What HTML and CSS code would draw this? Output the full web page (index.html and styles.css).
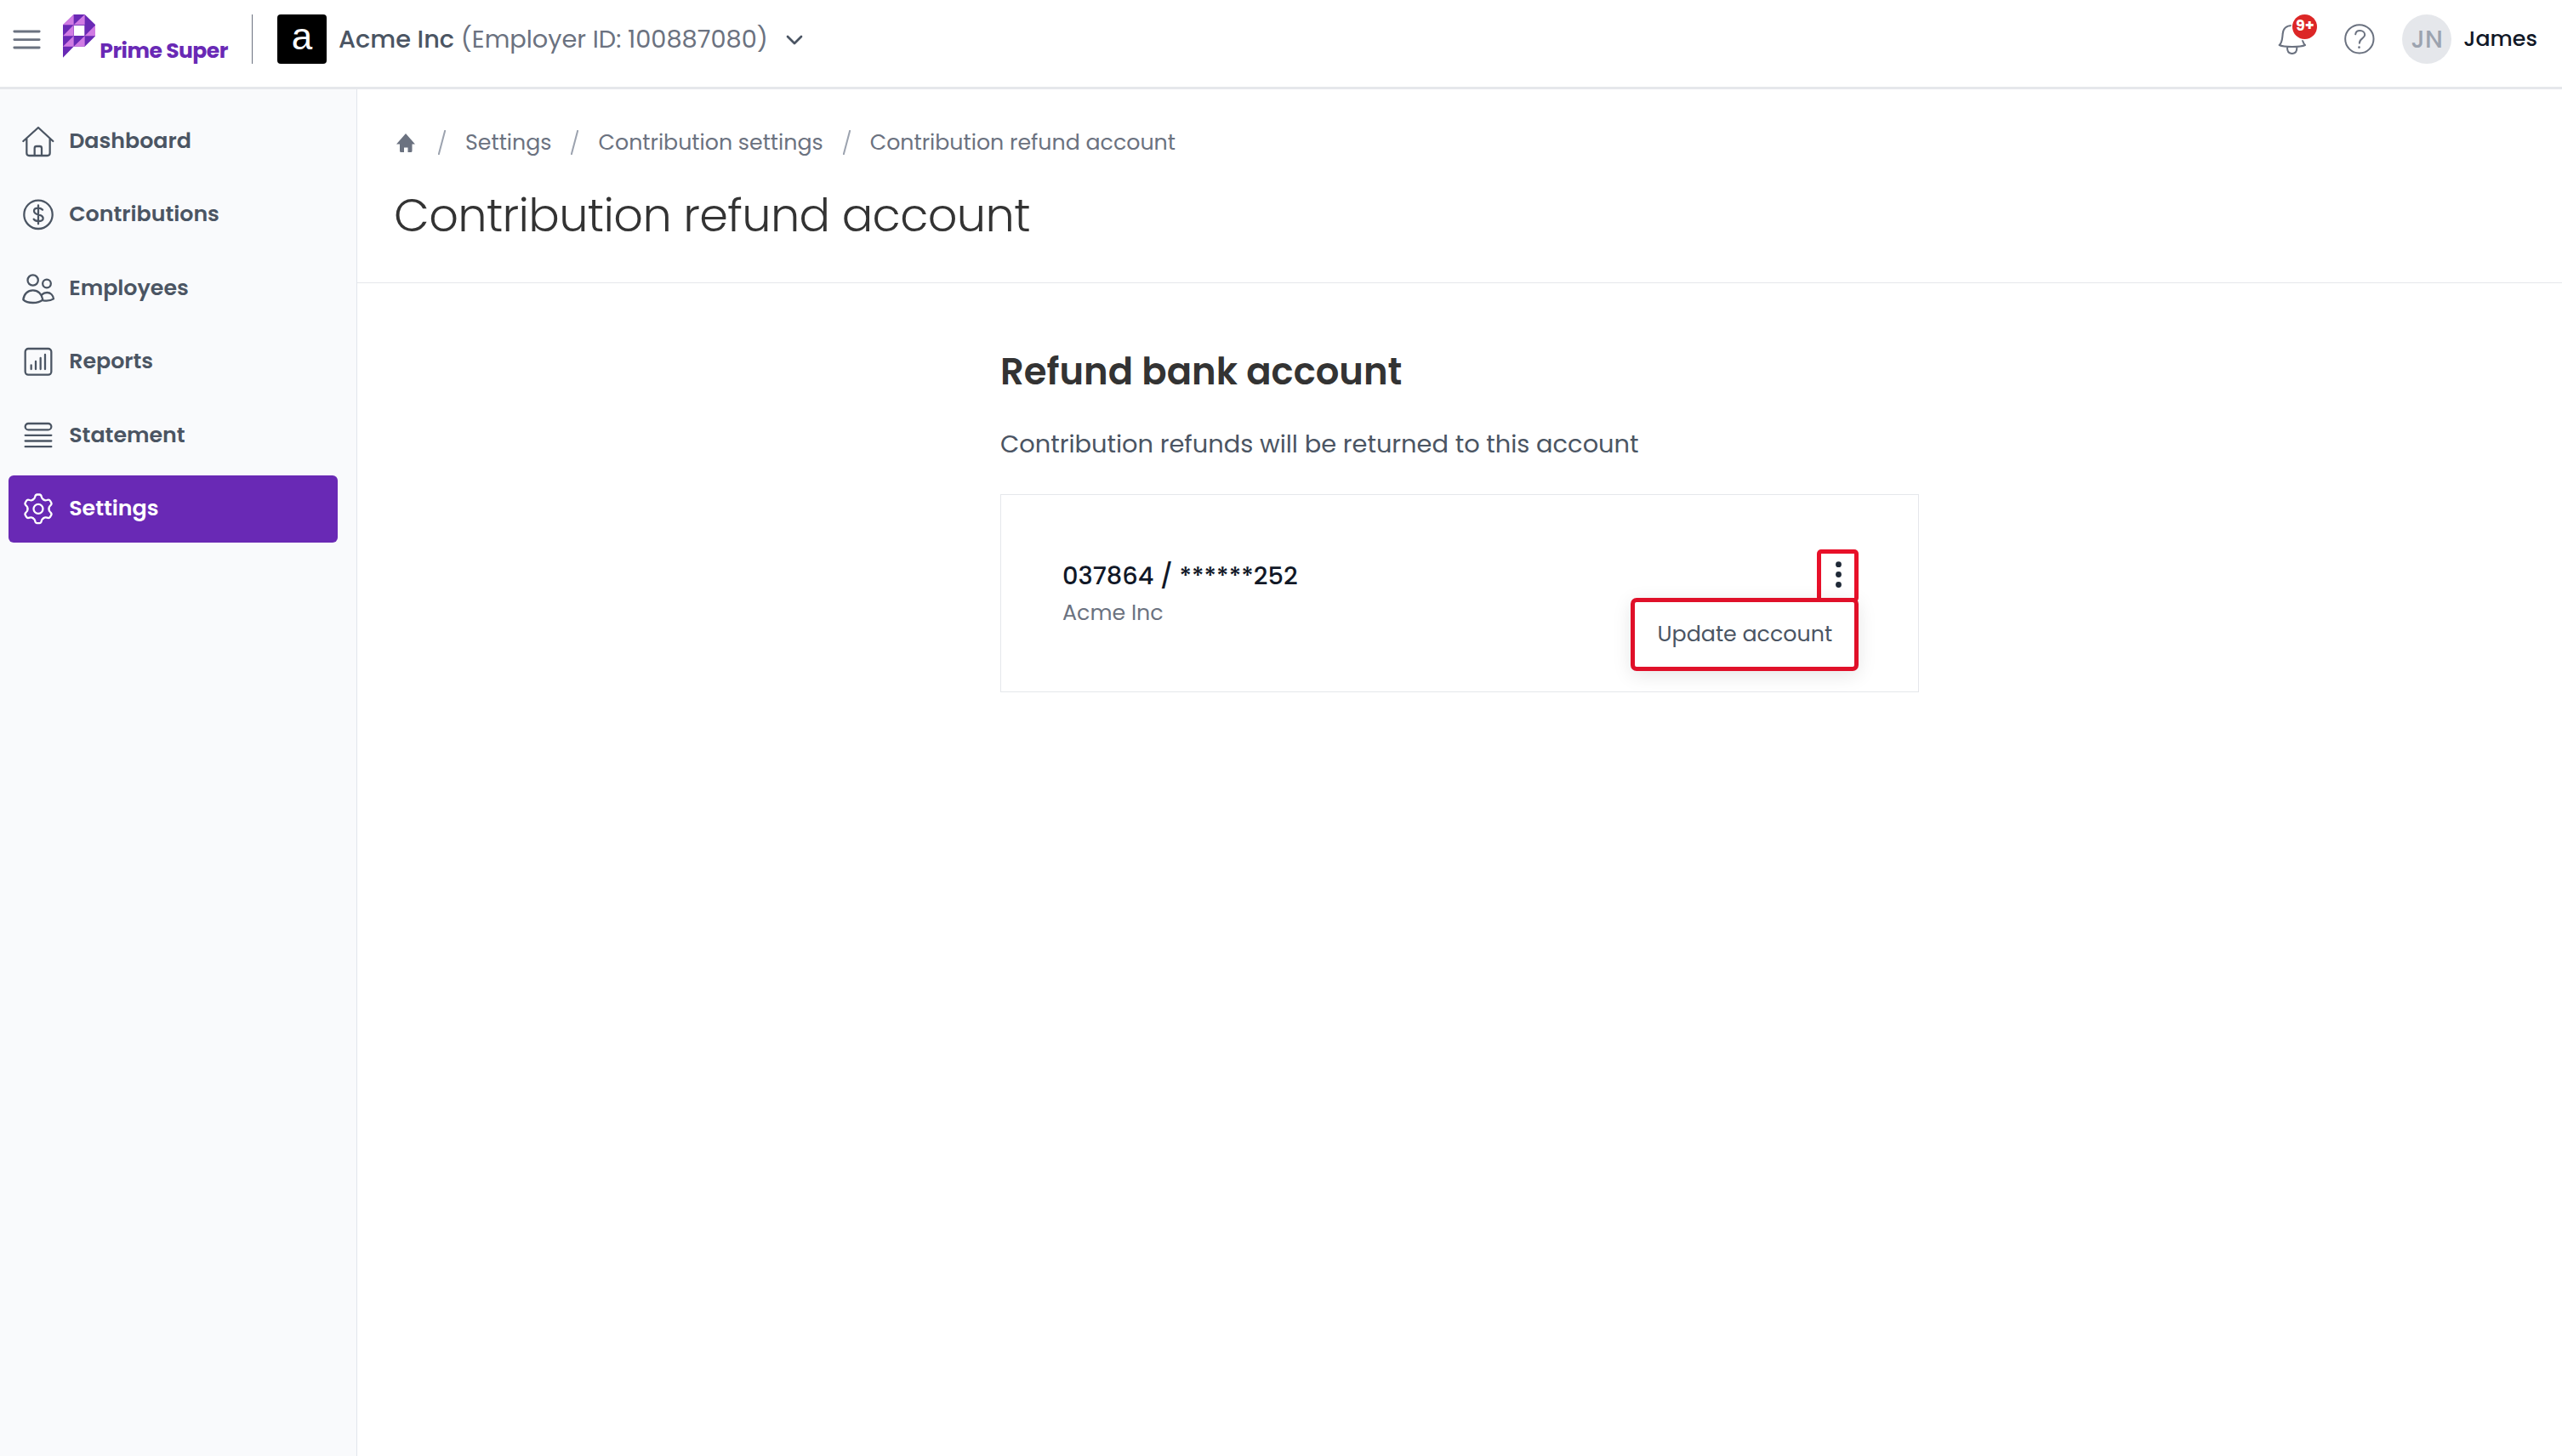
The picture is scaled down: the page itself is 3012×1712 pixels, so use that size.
FILE: index.html
```html
<!DOCTYPE html>
<html lang="en">
<head>
<meta charset="utf-8">
<title>Contribution refund account</title>
<link rel="stylesheet" href="styles.css">
</head>
<body>
<header class="topbar">
  <svg class="burger" viewBox="0 0 33 58"><path d="M1.8 20H31.2M1.8 29.6H31.2M1.8 39H31.2"/></svg>
  <div class="logo">
    <svg class="logo-mark" viewBox="222 51 115 153">
      <path class="dark" d="M260 51H299L337 88V127L299 164H260L222 203V88Z"/>
      <path class="light" d="M260 51V88H222ZM299 51V88H260ZM260 88V127H222ZM337 88V127H299ZM260 127V164H222ZM299 127V164H260Z"/>
      <path class="hole" d="M261 90H298V126H261Z"/>
    </svg>
    <span class="logo-text">Prime Super</span>
  </div>
  <div class="divider"></div>
  <div class="company-logo">a</div>
  <div class="company"><b>Acme Inc</b> (Employer ID: 100887080)</div>
  <svg class="chevron" viewBox="0 0 20 12"><path d="M2 2L10 10L18 2"/></svg>
  <div class="actions">
    <div class="bell">
      <svg viewBox="117 84 102 108"><path d="M122 159C133 149 132 136 134 120C135 101 148 90 167 90C186 90 199 101 200 120C202 136 202 149 213 159C197 167 138 167 122 159ZM150 168C150 182 156 189 167 189C178 189 184 182 184 168"/></svg>
      <span class="badge">9+</span>
    </div>
    <svg class="help" viewBox="350.5 86 107 107"><circle cx="404" cy="139.5" r="50"/><path d="M390 123C391 114 397 110 406 110C416 110 423 116 423 125C423 138 404 137 404 154"/><circle class="dot" cx="403" cy="169" r="4"/></svg>
    <div class="avatar">JN</div>
    <div class="user">James</div>
  </div>
</header>
<div class="shell">
  <nav class="sidebar">
    <a class="item"><svg viewBox="0 0 120 120"><path d="M7 60L60 12L112 60M19 51V102Q19 111 28 111H92Q101 111 101 102V51M47 110V85Q47 78 54 78H65Q72 78 72 85V110"/></svg><span>Dashboard</span></a>
    <a class="item"><svg viewBox="0 0 120 120"><circle cx="60" cy="61" r="50"/><path d="M60 28V94M75 44C70 39 66 38 60 38C50 38 45 42 45 48C45 56 52 59 60 61C69 63 77 66 77 74C77 81 70 84 60 84C52 84 47 82 44 77"/></svg><span>Contributions</span></a>
    <a class="item"><svg viewBox="0 0 120 120"><circle cx="41" cy="31.5" r="18.5"/><circle cx="90" cy="43.5" r="14.5"/><path d="M7 100C9 80 23 67 41 67C59 67 73 80 76 100C68 107 56 111 41 111C27 111 14 107 7 100ZM73 82C78 77 84 75 91 75C103 75 112 84 114 97C107 102 94 105 78 103"/></svg><span>Employees</span></a>
    <a class="item"><svg viewBox="0 0 120 120"><rect x="14" y="15" width="92" height="92" rx="11"/><path d="M35 73V87M51 60V87M68 48V87M84 36V87"/></svg><span>Reports</span></a>
    <a class="item"><svg viewBox="0 0 120 120"><rect x="14" y="18" width="92" height="22" rx="11"/><path d="M14 59.5H106M14 79.5H106M14 99.5H106"/></svg><span>Statement</span></a>
    <a class="item active"><svg viewBox="0 0 120 120"><defs><path id="tooth" d="M-18.8 -32.5Q-13 -35 -11.5 -42Q-10 -50.5 -4 -50.5H4Q10 -50.5 11.5 -42Q13 -35 18.8 -32.5"/></defs><g transform="translate(60 61)"><circle r="16.5"/><use href="#tooth"/><use href="#tooth" transform="rotate(60)"/><use href="#tooth" transform="rotate(120)"/><use href="#tooth" transform="rotate(180)"/><use href="#tooth" transform="rotate(240)"/><use href="#tooth" transform="rotate(300)"/></g></svg><span>Settings</span></a>
  </nav>
  <main class="main">
    <div class="page-head">
      <div class="crumbs">
        <svg class="home" viewBox="0 0 22 22"><path d="M11 0L22 12.5H18.5V20.5Q18.5 22 17 22H13.5V16.5H9V22H5.5Q4 22 4 20.5V12.5H0Z"/></svg>
        <svg class="slash" viewBox="0 0 9 29"><path d="M8.2 .5L.8 28.5"/></svg>
        <span>Settings</span>
        <svg class="slash" viewBox="0 0 9 29"><path d="M8.2 .5L.8 28.5"/></svg>
        <span>Contribution settings</span>
        <svg class="slash" viewBox="0 0 9 29"><path d="M8.2 .5L.8 28.5"/></svg>
        <span>Contribution refund account</span>
      </div>
      <h1>Contribution refund account</h1>
    </div>
    <section class="content">
      <h2>Refund bank account</h2>
      <p class="lead">Contribution refunds will be returned to this account</p>
      <div class="card">
        <div class="account">
          <div class="number">037864 / ******252</div>
          <div class="holder">Acme Inc</div>
        </div>
        <div class="more">
          <svg class="kebab" viewBox="0 0 49 62"><circle cx="25.5" cy="17.7" r="3.4"/><circle cx="25.5" cy="29.5" r="3.4"/><circle cx="25.5" cy="41.5" r="3.4"/></svg>
          <div class="menu">Update account</div>
        </div>
      </div>
    </section>
  </main>
</div>
</body>
</html>
```
FILE: styles.css
```css
* { box-sizing: border-box; }
body {
  margin: 0;
  height: 1712px;
  display: flex;
  flex-direction: column;
  background: #fff;
  color: #6b7280;
  font: 400 25.3px Poppins, Inter, sans-serif;
}
svg { display: block; flex: none; fill: none; stroke-linecap: round; stroke-linejoin: round; }
h1, h2, p { margin: 0; }

.topbar {
  flex: none;
  display: flex;
  align-items: flex-start;
  height: 105px;
  padding: 17px 29px 0 15px;
  border-bottom: 3px solid #e5e7eb;
}
.burger { width: 33px; height: 58px; stroke: #6b7280; stroke-width: 2.8; }
.logo { display: flex; gap: 5px; width: 222px; margin-left: 26px; }
.logo-mark { width: 38.3px; height: 51px; }
.dark { fill: #6929b5; }
.light { fill: #d07be3; }
.hole { fill: #fff; }
.logo-text { margin-top: 30px; font-size: 25px; font-weight: 700; line-height: 26px; letter-spacing: -.5px; color: #6929b5; white-space: nowrap; }
.divider { width: 1px; height: 58px; background: #6b7280; }
.company-logo {
  width: 58px; height: 58px;
  margin: 0 14px 0 29px;
  border-radius: 4px;
  background: #000;
  color: #fff;
  font: 44px/52px "Liberation Sans", sans-serif;
  text-align: center;
}
.company { font-size: 28.8px; line-height: 58px; white-space: nowrap; }
.company b { font-weight: 500; color: #4b5563; }
.chevron { width: 20px; height: 12px; margin: 24px 0 0 21px; stroke: #4b5563; stroke-width: 2.7; }
.actions { display: flex; align-items: center; height: 58px; margin-left: auto; }
.bell { position: relative; margin-right: 44px; }
.bell svg { width: 34px; height: 36px; stroke: #6b7280; stroke-width: 6.2; }
.badge {
  position: absolute; left: 17px; top: -11px;
  width: 29px; height: 29px;
  border-radius: 50%;
  background: #dc2626;
  box-shadow: 0 0 0 1.5px #fff;
  color: #fff;
  font-size: 17.5px; font-weight: 700; line-height: 27px; text-align: center;
}
.help { width: 35.7px; height: 35.7px; margin-right: 32px; stroke: #6b7280; stroke-width: 6; }
.help .dot { fill: #6b7280; stroke: none; }
.avatar { width: 58px; height: 58px; margin-right: 14px; border-radius: 50%; background: #e5e7eb; color: #9ca3af; font-size: 28.9px; font-weight: 500; line-height: 58px; text-align: center; }
.user { color: #111827; font-weight: 500; line-height: 54px; padding-bottom: 2px; }

.shell { flex: 1; display: flex; }
.sidebar {
  width: 420px;
  display: flex;
  flex-direction: column;
  gap: 7.8px;
  padding: 21.5px 22px 0 10px;
  border-right: 1px solid #e2e5eb;
  background: #f9fafc;
}
.item { display: flex; align-items: center; gap: 16px; height: 78.7px; padding-left: 15.2px; border-radius: 6px; color: #4b5563; font-weight: 600; line-height: 38px; }
.item span { padding-bottom: 2px; }
.item svg { width: 40px; height: 40px; stroke: #4b5563; stroke-width: 6.8; }
.item.active { background: #6929b5; color: #fff; }
.item.active svg { stroke: #fff; }

.main { flex: 1; }
.page-head { height: 228px; padding: 47px 0 0 43px; border-bottom: 1px solid #e5e7eb; }
.crumbs { display: flex; align-items: center; height: 30px; font-size: 25.25px; }
.home { width: 22px; height: 22px; margin: 2px 4px 0 3px; fill: #6b7280; }
.slash { width: 9px; height: 29px; margin: 0 23px; stroke: #9ca3af; stroke-width: 2; }
h1 { margin-top: 41px; font-size: 54.2px; font-weight: 300; line-height: 60px; letter-spacing: -.65px; color: #333; }
.content { width: 1080px; margin: 0 auto; padding-top: 74px; }
h2 { font-size: 43.3px; font-weight: 600; line-height: 60px; color: #333; }
.lead { margin-top: 33px; font-size: 28.85px; line-height: 44px; color: #4b5563; }
.card { display: flex; justify-content: space-between; align-items: flex-start; height: 233px; margin-top: 37px; padding: 64px 70px 0 72px; border: 1px solid #e5e7eb; }
.account { padding-top: 9px; }
.number { font-size: 28.9px; font-weight: 500; line-height: 44px; color: #111827; }
.holder { margin-top: 1px; line-height: 40px; }
.more { position: relative; }
.kebab { width: 49px; height: 62px; border-radius: 5px; box-shadow: inset 0 0 0 5px #e81029; fill: #1f2937; }
.menu {
  position: absolute; right: 0; top: 57px;
  width: 268px; height: 86px;
  padding-left: 26.5px;
  border: 5px solid #e01029;
  border-radius: 7px;
  background: #fff;
  box-shadow: 0 5px 22px rgba(0, 0, 0, .1);
  color: #4b5563;
  line-height: 74px;
  white-space: nowrap;
}
```
